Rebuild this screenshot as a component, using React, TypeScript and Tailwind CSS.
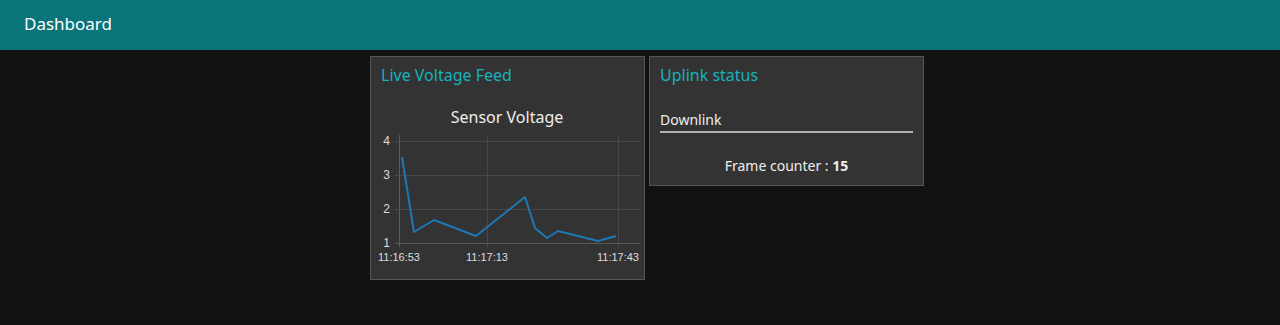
const pts: [number, number][] = [
  [31, 64], [43, 139], [63, 127], [105, 143], [154, 104],
  [164, 135], [176, 145], [187, 138], [227, 148], [245, 143],
];

function VoltageChart() {
  const yTicks = [
    { v: "4", y: 48 },
    { v: "3", y: 82 },
    { v: "2", y: 116 },
    { v: "1", y: 150 },
  ];
  const xTicks = [
    { t: "11:16:53", x: 28 },
    { t: "11:17:13", x: 116 },
    { t: "11:17:43", x: 247 },
  ];
  return (
    <svg width={273} height={186} className="block">
      <text x={136} y={30} textAnchor="middle" fill="#eeeeee" fontSize={16} fontFamily="'Noto Sans', sans-serif">
        Sensor Voltage
      </text>
      {yTicks.map((t) => (
        <g key={t.v}>
          <line x1={24} x2={269} y1={t.y + 0.5} y2={t.y + 0.5} stroke={t.v === "1" ? "#5a5a5a" : "#484848"} />
          <text x={19} y={t.y + 4} textAnchor="end" fill="#dddddd" fontSize={12} fontFamily="'Liberation Sans', Arial, sans-serif">
            {t.v}
          </text>
        </g>
      ))}
      {xTicks.map((t) => (
        <g key={t.t}>
          <line x1={t.x + 0.5} x2={t.x + 0.5} y1={42} y2={154} stroke={t.x === 28 ? "#5a5a5a" : "#484848"} />
          <text x={t.x} y={168} textAnchor="middle" fill="#dddddd" fontSize={11} fontFamily="'Liberation Sans', Arial, sans-serif">
            {t.t}
          </text>
        </g>
      ))}
      <polyline
        points={pts.map((p) => p.join(",")).join(" ")}
        fill="none"
        stroke="#1f77b4"
        strokeWidth={2}
        strokeLinejoin="round"
      />
    </svg>
  );
}

export default function App() {
  return (
    <div className="min-h-[325px] bg-[#111111] font-['Noto_Sans',sans-serif] text-[#eeeeee]">
      <header className="flex h-[50px] items-center bg-[#097479] px-[24px] pb-[4px]">
        <h1 className="text-[17px] leading-none text-white">Dashboard</h1>
      </header>

      <main className="flex justify-center gap-[4px] pl-[14px] pt-[6px]">
        <section className="w-[275px] h-[224px] border border-[#555555] bg-[#333333]">
          <div className="px-[10px] pt-[7px] text-[16px] leading-[22px] text-[#16b2be]">Live Voltage Feed</div>
          <div className="mt-[7px]">
            <VoltageChart />
          </div>
        </section>

        <section className="flex h-[130px] w-[275px] flex-col border border-[#555555] bg-[#333333]">
          <div className="px-[10px] pt-[7px] text-[16px] leading-[22px] text-[#16b2be]">Uplink status</div>
          <div className="mx-[10px] mt-[24px] border-b-2 border-[#b0b0b0] pb-[1px] text-[14px] leading-[20px] text-[#eeeeee]">
            Downlink
          </div>
          <div className="mt-[23px] text-center text-[14px] leading-[20px]">
            Frame counter : <span className="font-bold">15</span>
          </div>
        </section>
      </main>
    </div>
  );
}
